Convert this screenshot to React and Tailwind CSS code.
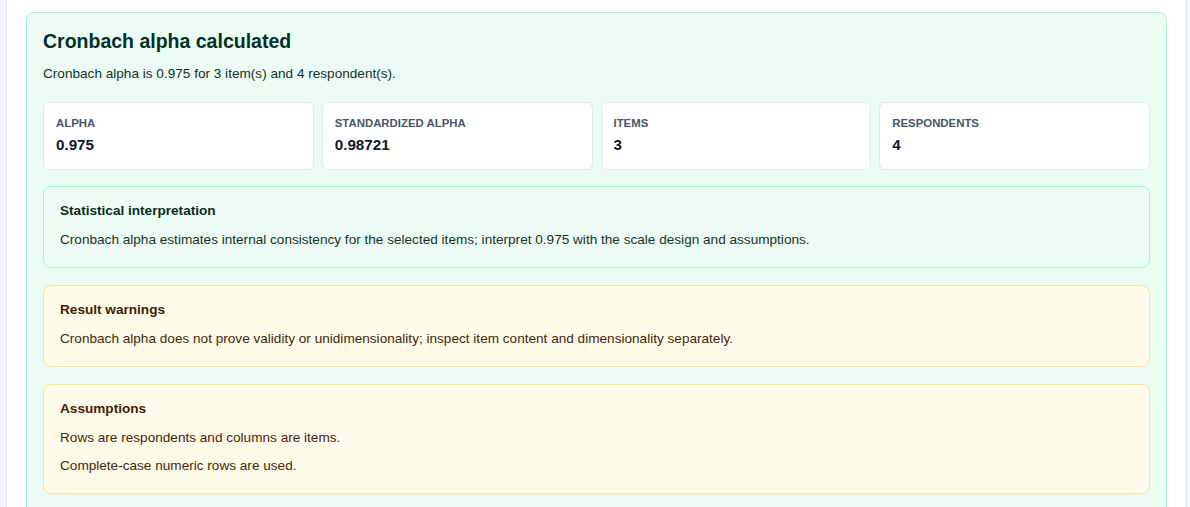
import React from "react";

const stats = [
  { label: "Alpha", value: "0.975" },
  { label: "Standardized alpha", value: "0.98721" },
  { label: "Items", value: "3" },
  { label: "Respondents", value: "4" },
];

function Box({ tone, title, lines }) {
  const green = tone === "green";
  return (
    <div
      className={
        "rounded-lg border px-4 pt-[15px] pb-[17px] " +
        (green
          ? "border-[#a7f3d0] bg-[#ecfdf5]"
          : "border-[#fde68a] bg-[#fefbea]")
      }
    >
      <div
        className={
          "text-[13.6px] font-bold leading-[18px] mb-[10px] " +
          (green ? "text-[#0b2a22]" : "text-[#451a03]")
        }
      >
        {title}
      </div>
      <div className="flex flex-col gap-2">
        {lines.map((l) => (
          <p
            key={l}
            className={
              "text-[13.6px] leading-[20px] " +
              (green ? "text-[#163229]" : "text-[#46260c]")
            }
          >
            {l}
          </p>
        ))}
      </div>
    </div>
  );
}

export default function App() {
  return (
    <div
      className="min-h-screen bg-[#f3f6fa] pl-[6px] pr-[3px]"
      style={{ fontFamily: '"Liberation Sans", Arial, sans-serif' }}
    >
      <div className="min-h-[507px] bg-white border-x border-[#e3e8ef] px-[19px] pt-[12px]">
        <div className="rounded-lg border border-[#a7f3d0] bg-[#ebfcf4] px-4 pt-[15px] pb-6">
          <h2 className="text-[19.5px] font-bold leading-[26px] text-[#04302a]">
            Cronbach alpha calculated
          </h2>
          <p className="mt-[10px] text-[13.6px] leading-[20px] text-[#143128]">
            Cronbach alpha is 0.975 for 3 item(s) and 4 respondent(s).
          </p>
          <div className="mt-[18px] grid grid-cols-4 gap-2">
            {stats.map((s) => (
              <div
                key={s.label}
                className="rounded-md border border-[#e2e8f0] bg-white px-3 pt-3 pb-[14px]"
              >
                <div className="text-[11.4px] font-bold uppercase leading-[16px] text-[#475569]">
                  {s.label}
                </div>
                <div className="mt-1 text-[15.2px] font-bold leading-[20px] text-[#0f172a]">
                  {s.value}
                </div>
              </div>
            ))}
          </div>
          <div className="mt-4 flex flex-col gap-[17px]">
            <Box
              tone="green"
              title="Statistical interpretation"
              lines={[
                "Cronbach alpha estimates internal consistency for the selected items; interpret 0.975 with the scale design and assumptions.",
              ]}
            />
            <Box
              tone="amber"
              title="Result warnings"
              lines={[
                "Cronbach alpha does not prove validity or unidimensionality; inspect item content and dimensionality separately.",
              ]}
            />
            <Box
              tone="amber"
              title="Assumptions"
              lines={[
                "Rows are respondents and columns are items.",
                "Complete-case numeric rows are used.",
              ]}
            />
          </div>
        </div>
      </div>
    </div>
  );
}
